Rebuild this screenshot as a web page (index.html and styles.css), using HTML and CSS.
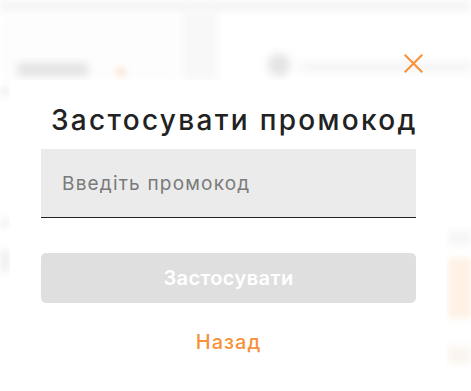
FILE: index.html
```html
<!DOCTYPE html>
<html lang="uk">
<head>
<meta charset="utf-8">
<title>Застосувати промокод</title>
<link rel="stylesheet" href="styles.css">
</head>
<body>
<div class="backdrop" aria-hidden="true">
  <div class="bd top-band"></div>
  <div class="bd left-panel"></div>
  <div class="bd col-lines"></div>
  <div class="bd left-text"></div>
  <div class="bd left-dot"></div>
  <div class="bd right-circle"></div>
  <div class="bd right-text"></div>
  <div class="bd edge-l1"></div>
  <div class="bd edge-l2"></div>
  <div class="bd edge-l3"></div>
  <div class="bd edge-r1"></div>
  <div class="bd edge-r2"></div>
  <div class="bd edge-r3"></div>
</div>
<div class="dialog">
  <button class="close" type="button" aria-label="Закрити">
    <svg width="19" height="19" viewBox="0 0 19 19"><path d="M1.5 1.5 L17.5 17.5 M17.5 1.5 L1.5 17.5" stroke="#f7923a" stroke-width="2.1" stroke-linecap="square" fill="none"/></svg>
  </button>
  <h2 class="title">Застосувати промокод</h2>
  <input class="promo" type="text" placeholder="Введіть промокод">
  <button class="apply" type="button" disabled>Застосувати</button>
  <a class="back" href="#">Назад</a>
</div>
</body>
</html>
```
FILE: styles.css
```css
html, body {
  margin: 0;
  padding: 0;
}
body {
  width: 471px;
  height: 391px;
  overflow: hidden;
  position: relative;
  background: #ffffff;
  font-family: "Inter", "Open Sans", sans-serif;
}
.backdrop {
  position: absolute;
  inset: 0;
}
.bd {
  position: absolute;
  filter: blur(3px);
}
.top-band { left: 0; top: 0; width: 471px; height: 12px; background: #f6f6f6; }
.left-panel { left: 0; top: 14px; width: 180px; height: 66px; background: #fdfdfd; }
.col-lines { left: 182px; top: 12px; width: 36px; height: 68px; background: #f8f8f8; }
.left-text { left: 18px; top: 63px; width: 70px; height: 13px; background: #e2e2e2; filter: blur(4px); }
.left-dot { left: 116px; top: 68px; width: 10px; height: 8px; background: #fbe3cf; border-radius: 50%; }
.right-circle { left: 268px; top: 54px; width: 22px; height: 22px; background: #e2e2e2; border-radius: 50%; filter: blur(5px); }
.right-text { left: 300px; top: 62px; width: 171px; height: 10px; background: #f4f4f4; filter: blur(5px); }
.edge-l1 { left: 0; top: 86px; width: 10px; height: 10px; background: #f3f3f3; }
.edge-l2 { left: 0; top: 218px; width: 10px; height: 10px; background: #f5f5f5; }
.edge-l3 { left: 0; top: 250px; width: 10px; height: 22px; background: #f1f1f1; }
.edge-r1 { left: 448px; top: 230px; width: 23px; height: 16px; background: #f7f7f7; }
.edge-r2 { left: 448px; top: 258px; width: 23px; height: 60px; background: #fff1e4; }
.edge-r3 { left: 448px; top: 346px; width: 23px; height: 18px; background: #fbf5f0; }

.dialog {
  position: absolute;
  left: 10px;
  top: 80px;
  width: 436px;
  bottom: 0;
  background: #ffffff;
  box-sizing: border-box;
  padding: 23px 30px 0 31px;
  display: flex;
  flex-direction: column;
}
.close {
  position: absolute;
  top: -26px;
  right: 23px;
  width: 19px;
  height: 19px;
  padding: 0;
  border: 0;
  background: transparent;
  display: flex;
}
.title {
  margin: 0;
  font-size: 28px;
  line-height: 34px;
  font-weight: 500;
  letter-spacing: 2.3px;
  color: #222222;
  text-align: center;
  padding-left: 10px;
  white-space: nowrap;
}
.promo {
  margin-top: 12px;
  height: 69px;
  box-sizing: border-box;
  border: 0;
  border-bottom: 1px solid #222222;
  background: #ebebeb;
  padding: 0 0 0 21px;
  font-family: inherit;
  font-size: 19px;
  letter-spacing: 1.2px;
  color: #222;
  outline: none;
}
.promo::placeholder {
  color: #7a7a7a;
}
.apply {
  margin-top: 35px;
  height: 50px;
  border: 0;
  border-radius: 5px;
  background: #dfdfdf;
  color: #ffffff;
  font-family: inherit;
  font-size: 20px;
  font-weight: 600;
  letter-spacing: 0.4px;
}
.back {
  align-self: center;
  margin-top: 27px;
  font-size: 20px;
  line-height: 24px;
  font-weight: 500;
  letter-spacing: 1px;
  color: #f7923a;
  text-decoration: none;
}
```
